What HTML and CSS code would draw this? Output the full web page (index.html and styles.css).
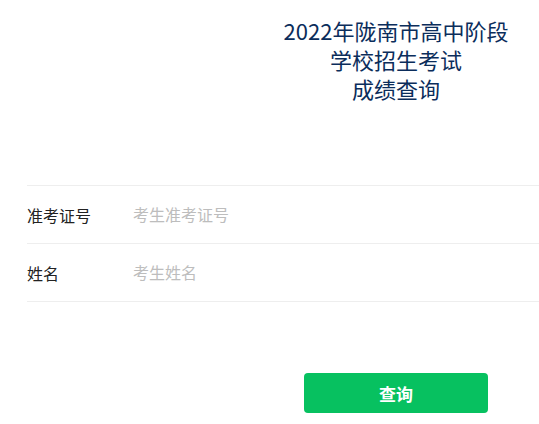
FILE: index.html
```html
<!DOCTYPE html>
<html lang="zh-CN">
  <head>
    <meta charset="UTF-8" />
    <meta name="viewport" content="width=device-width, initial-scale=1.0" />
    <title>成绩查询</title>
    <link rel="stylesheet" href="styles.css">
  </head>
  <body>
    <div class="page">
      <h1 class="title">2022年陇南市高中阶段<br />学校招生考试<br />成绩查询</h1>

      <form class="form" onsubmit="return false">
        <label class="row">
          <span class="label">准考证号</span>
          <input class="field" type="text" placeholder="考生准考证号" />
        </label>
        <label class="row">
          <span class="label">姓名</span>
          <input class="field" type="text" placeholder="考生姓名" />
        </label>

        <div class="actions">
          <button class="submit" type="submit">查询</button>
        </div>
      </form>
    </div>
  </body>
</html>
```

FILE: styles.css
```css
html,
body {
  margin: 0;
  background: #ffffff;
}

body {
  font-family: "Noto Sans CJK SC", "Noto Sans", sans-serif;
  color: #333333;
}

.page {
  padding-left: 27px;
}

.title {
  margin: 16px 0 0;
  padding-left: 226px;
  font-size: 22px;
  font-weight: normal;
  line-height: 29px;
  text-align: center;
  color: #0b2d5b;
}

.form {
  margin-top: 82px;
  border-top: 1px solid #eeeeee;
}

.row {
  display: flex;
  align-items: center;
  height: 57px;
  border-bottom: 1px solid #eeeeee;
}

.label {
  width: 106px;
  font-size: 16px;
  color: #222222;
}

.field {
  flex: 1;
  min-width: 0;
  border: none;
  outline: none;
  padding: 0;
  margin-top: -2px;
  font-family: inherit;
  font-size: 16px;
  color: #333333;
  background: transparent;
}

.field::placeholder {
  color: #bdbdbd;
}

.actions {
  display: flex;
  justify-content: center;
  padding-left: 226px;
  margin-top: 71px;
}

.submit {
  width: 184px;
  height: 40px;
  border: none;
  border-radius: 4px;
  background: #07c160;
  color: #ffffff;
  font-family: inherit;
  font-size: 17px;
  font-weight: bold;
  cursor: pointer;
}
```
